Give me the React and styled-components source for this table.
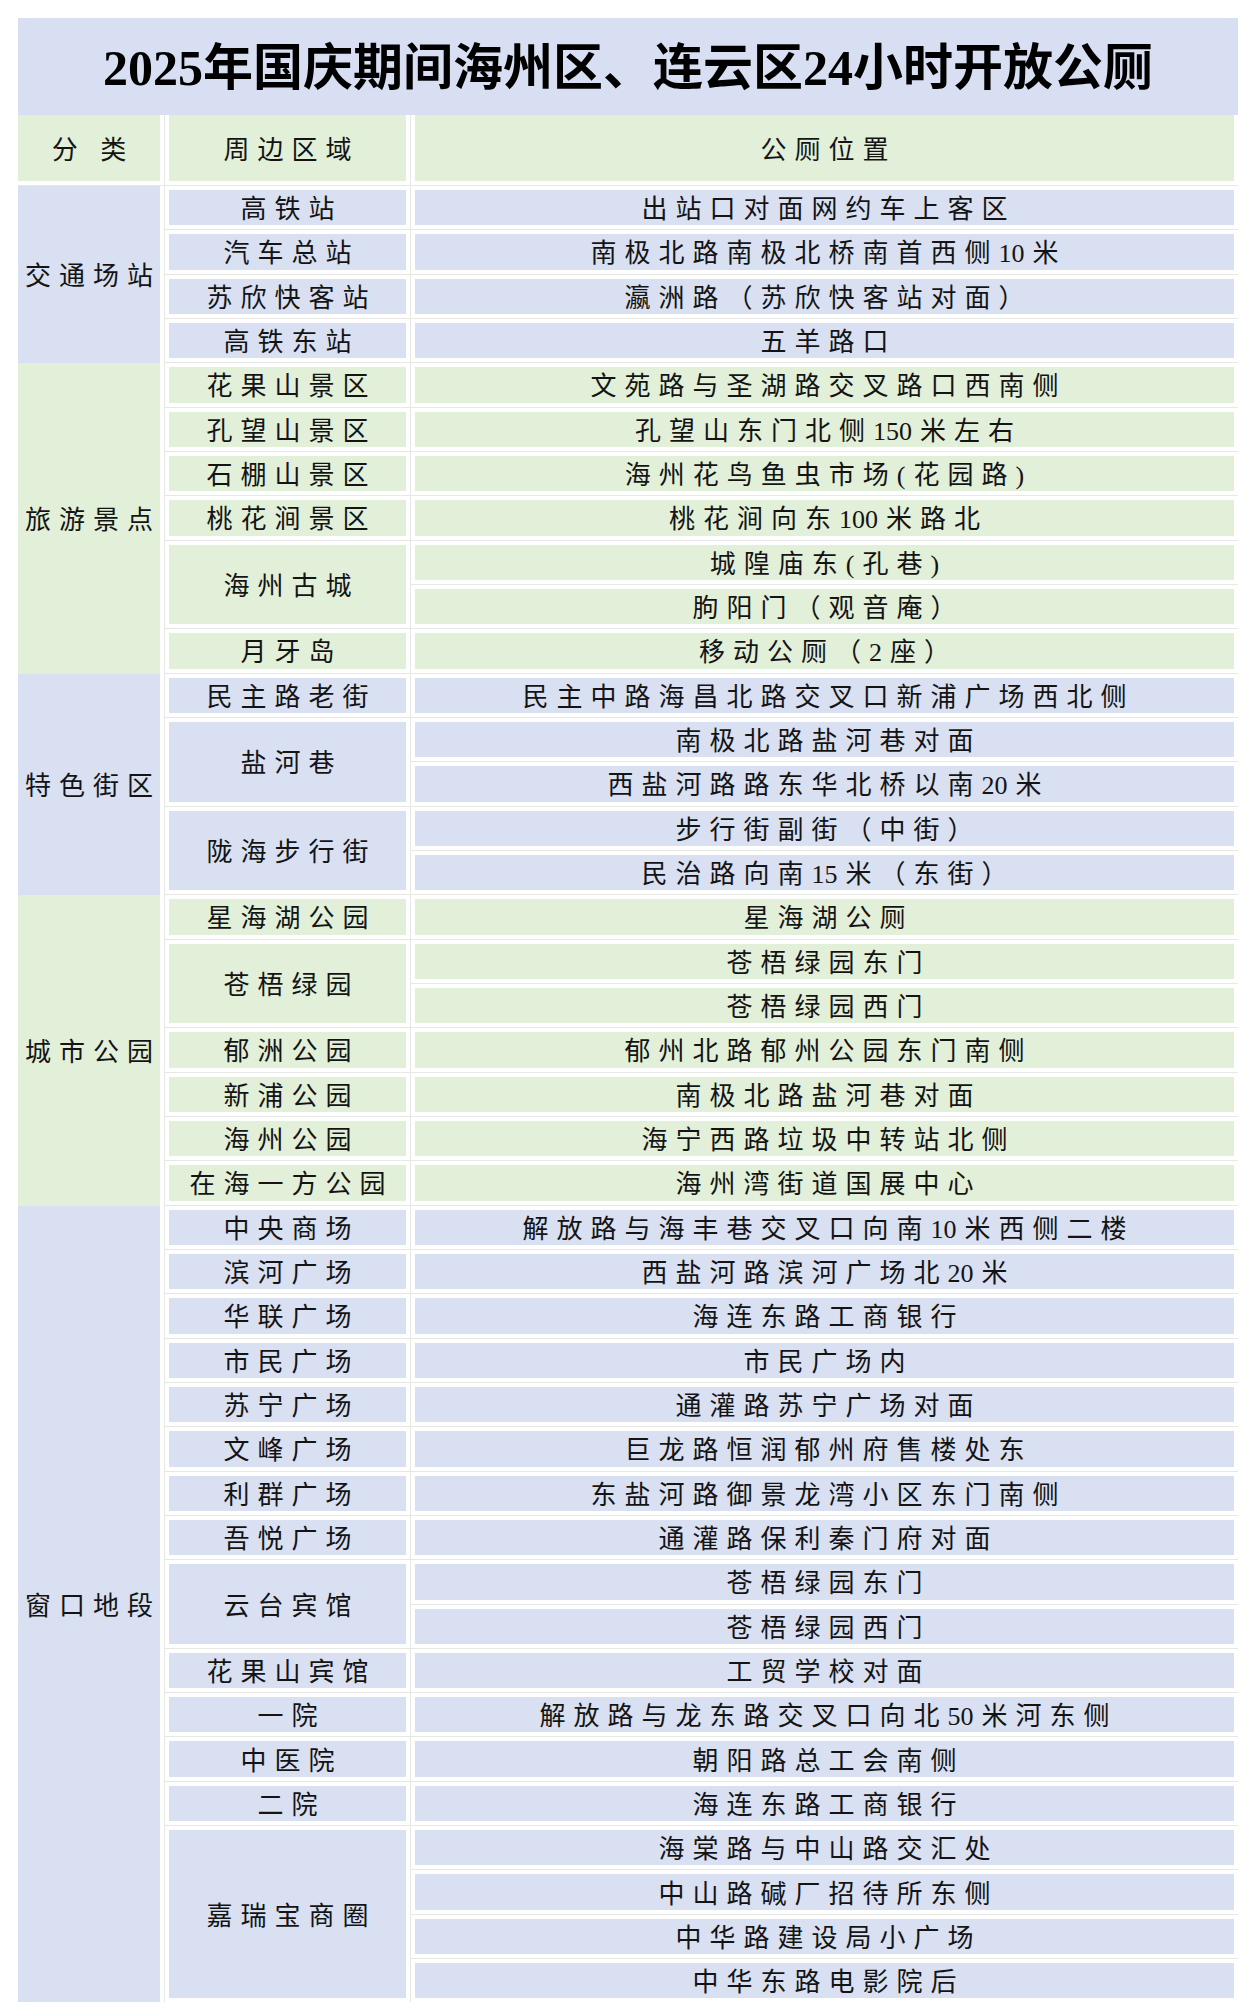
import styled, { createGlobalStyle } from "styled-components";

const tones = {
  blue: "#d9e0f2",
  green: "#e2efd9",
};

const sections = [
  {
    name: "交通场站",
    tone: "blue",
    items: [
      { area: "高铁站", places: ["出站口对面网约车上客区"] },
      { area: "汽车总站", places: ["南极北路南极北桥南首西侧10米"] },
      { area: "苏欣快客站", places: ["瀛洲路（苏欣快客站对面）"] },
      { area: "高铁东站", places: ["五羊路口"] },
    ],
  },
  {
    name: "旅游景点",
    tone: "green",
    items: [
      { area: "花果山景区", places: ["文苑路与圣湖路交叉路口西南侧"] },
      { area: "孔望山景区", places: ["孔望山东门北侧150米左右"] },
      { area: "石棚山景区", places: ["海州花鸟鱼虫市场(花园路)"] },
      { area: "桃花涧景区", places: ["桃花涧向东100米路北"] },
      { area: "海州古城", places: ["城隍庙东(孔巷)", "朐阳门（观音庵）"] },
      { area: "月牙岛", places: ["移动公厕（2座）"] },
    ],
  },
  {
    name: "特色街区",
    tone: "blue",
    items: [
      { area: "民主路老街", places: ["民主中路海昌北路交叉口新浦广场西北侧"] },
      { area: "盐河巷", places: ["南极北路盐河巷对面", "西盐河路路东华北桥以南20米"] },
      { area: "陇海步行街", places: ["步行街副街（中街）", "民治路向南15米（东街）"] },
    ],
  },
  {
    name: "城市公园",
    tone: "green",
    items: [
      { area: "星海湖公园", places: ["星海湖公厕"] },
      { area: "苍梧绿园", places: ["苍梧绿园东门", "苍梧绿园西门"] },
      { area: "郁洲公园", places: ["郁州北路郁州公园东门南侧"] },
      { area: "新浦公园", places: ["南极北路盐河巷对面"] },
      { area: "海州公园", places: ["海宁西路垃圾中转站北侧"] },
      { area: "在海一方公园", places: ["海州湾街道国展中心"] },
    ],
  },
  {
    name: "窗口地段",
    tone: "blue",
    items: [
      { area: "中央商场", places: ["解放路与海丰巷交叉口向南10米西侧二楼"] },
      { area: "滨河广场", places: ["西盐河路滨河广场北20米"] },
      { area: "华联广场", places: ["海连东路工商银行"] },
      { area: "市民广场", places: ["市民广场内"] },
      { area: "苏宁广场", places: ["通灌路苏宁广场对面"] },
      { area: "文峰广场", places: ["巨龙路恒润郁州府售楼处东"] },
      { area: "利群广场", places: ["东盐河路御景龙湾小区东门南侧"] },
      { area: "吾悦广场", places: ["通灌路保利秦门府对面"] },
      { area: "云台宾馆", places: ["苍梧绿园东门", "苍梧绿园西门"] },
      { area: "花果山宾馆", places: ["工贸学校对面"] },
      { area: "一院", places: ["解放路与龙东路交叉口向北50米河东侧"] },
      { area: "中医院", places: ["朝阳路总工会南侧"] },
      { area: "二院", places: ["海连东路工商银行"] },
      {
        area: "嘉瑞宝商圈",
        places: ["海棠路与中山路交汇处", "中山路碱厂招待所东侧", "中华路建设局小广场", "中华东路电影院后"],
      },
    ],
  },
];

const totalRows = sections.reduce(
  (n, s) => n + s.items.reduce((m, it) => m + it.places.length, 0),
  0
);

// digits and ascii brackets are set tight, like in the sheet
function Spaced({ text }) {
  const parts = text.split(/([0-9()]+)/).filter(Boolean);
  return (
    <CellText>
      {parts.map((part, i) =>
        /^[0-9()]+$/.test(part) ? <Tight key={i}>{part}</Tight> : part
      )}
    </CellText>
  );
}

function App() {
  const cells = [];
  let row = 2;

  sections.forEach((sec) => {
    const span = sec.items.reduce((m, it) => m + it.places.length, 0);
    cells.push(
      <CategoryCell key={sec.name} $tone={sec.tone} $row={row} $span={span}>
        <Spaced text={sec.name} />
      </CategoryCell>
    );
    let r = row;
    sec.items.forEach((it) => {
      cells.push(
        <AreaCell key={sec.name + it.area} $tone={sec.tone} $row={r} $span={it.places.length}>
          <Spaced text={it.area} />
        </AreaCell>
      );
      it.places.forEach((p, i) => {
        cells.push(
          <PlaceCell key={sec.name + it.area + i} $tone={sec.tone} $row={r + i}>
            <Spaced text={p} />
          </PlaceCell>
        );
      });
      r += it.places.length;
    });
    row += span;
  });

  return (
    <>
      <GlobalStyle />
      <Sheet>
        <TitleBand>2025年国庆期间海州区、连云区24小时开放公厕</TitleBand>
        <Grid $rows={totalRows}>
          <HeadCell $first>
            <Spaced text="分 类" />
          </HeadCell>
          <HeadCell>
            <Spaced text="周边区域" />
          </HeadCell>
          <HeadCell>
            <Spaced text="公厕位置" />
          </HeadCell>
          {cells}
        </Grid>
      </Sheet>
    </>
  );
}

const GlobalStyle = createGlobalStyle`
  html, body {
    margin: 0;
    padding: 0;
    background: #ffffff;
  }
  body {
    font-family: "Liberation Serif", "Noto Sans CJK SC", serif;
    color: #111;
  }
`;

const Sheet = styled.div`
  width: 1220px;
  margin: 18px 0 0 18px;
`;

const TitleBand = styled.div`
  height: 97px;
  box-sizing: border-box;
  padding-bottom: 8px;
  background: #d9dff3;
  display: flex;
  align-items: center;
  justify-content: center;
  font-family: "Liberation Serif", "Noto Sans CJK SC", serif;
  font-weight: 700;
  font-size: 50px;
  color: #000;
  white-space: nowrap;
`;

const Grid = styled.div`
  display: grid;
  grid-template-columns: 146px 245px 1fr;
  grid-template-rows: 70px repeat(${(p) => p.$rows}, 43.33px);
  gap: 1px;
  background: #e6e8e6;
`;

const Cell = styled.div`
  box-sizing: border-box;
  display: flex;
  align-items: center;
  justify-content: center;
  background-color: ${(p) => tones[p.$tone] || tones.green};
  background-clip: padding-box;
  overflow: hidden;
`;

const HeadCell = styled(Cell)`
  border: 4px solid #fff;
  border-top: 0;
  border-left: ${(p) => (p.$first ? "0" : "4px solid #fff")};
`;

const CategoryCell = styled(Cell)`
  grid-column: 1;
  grid-row: ${(p) => p.$row} / span ${(p) => p.$span};
  border-right: 4px solid #fff;
  margin-bottom: -1px;
`;

const AreaCell = styled(Cell)`
  grid-column: 2;
  grid-row: ${(p) => p.$row} / span ${(p) => p.$span};
  border: 4px solid #fff;
`;

const PlaceCell = styled(Cell)`
  grid-column: 3;
  grid-row: ${(p) => p.$row};
  border: 4px solid #fff;
`;

const CellText = styled.span`
  font-family: "Liberation Serif", "Noto Sans CJK SC", serif;
  font-size: 26px;
  line-height: 1;
  letter-spacing: 8px;
  padding-left: 8px;
  padding-top: 5px;
  white-space: nowrap;
  color: #141414;
`;

const Tight = styled.span`
  letter-spacing: 0;
  margin-right: 8px;
`;

export default App;
